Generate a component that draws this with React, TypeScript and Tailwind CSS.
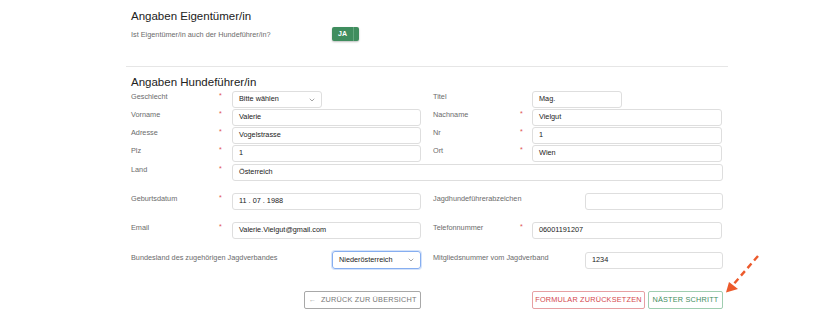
import { ChevronDown } from "lucide-react";

type FieldProps = {
  label: string;
  required?: boolean;
  value?: string;
  select?: boolean;
  right?: boolean;
  inputClass: string;
};

function Field({ label, required, value, select, right, inputClass }: FieldProps) {
  return (
    <div className="flex items-start">
      <div className={`${right ? "w-[87px]" : "w-[88px]"} pt-[1px] leading-[10px] text-[7.3px] text-[#6b6b6b]`}>
        {label}
      </div>
      <div className={`${right ? "w-[12px]" : "w-[13px]"} leading-[10px] text-[7px] text-[#e0524f]`}>
        {required ? "*" : ""}
      </div>
      <div
        className={`${inputClass} flex items-center justify-between border border-[#dedede] rounded-[3px] bg-white pl-[6px] pr-[5px] text-[7.3px] text-[#222]`}
      >
        <span>{value}</span>
        {select && <ChevronDown size={8} strokeWidth={1.6} className="text-[#555]" />}
      </div>
    </div>
  );
}

export default function App() {
  return (
    <div className="relative w-[820px] h-[322px] overflow-hidden bg-white font-['Liberation_Sans',Arial,sans-serif]">
      <div className="ml-[126px] w-[602px]">
        {/* Eigentümer */}
        <div className="h-[67px] border-b border-[#e6e6e6] pl-[5px] pt-[9px]">
          <h2 className="text-[11.5px] leading-[14px] text-[#222]">Angaben Eigentümer/in</h2>
          <div className="flex items-start mt-[4px]">
            <div className="w-[201px] pt-[3px] leading-[10px] text-[7.3px] text-[#6b6b6b]">
              Ist Eigentümer/in auch der Hundeführer/in?
            </div>
            <div className="flex h-[14px] rounded-[2px] bg-[#3f8d5e] shadow-[0_1px_2px_rgba(0,0,0,0.25)]">
              <div className="w-[21px] flex items-center justify-center text-[7px] font-bold text-white">JA</div>
              <div className="w-[6px] border-l border-[#63a77e]" />
            </div>
          </div>
        </div>

        {/* Hundeführer */}
        <div className="pl-[5px] pt-[8px]">
          <h2 className="text-[11.5px] leading-[14px] text-[#222]">Angaben Hundeführer/in</h2>

          <div className="mt-[2px] flex flex-col gap-[1px]">
            <div className="grid grid-cols-2 gap-x-[12px] w-[592px]">
              <Field label="Geschlecht" required value="Bitte wählen" select inputClass="w-[90px] h-[17px]" />
              <Field label="Titel" right value="Mag." inputClass="w-[90px] h-[17px]" />
            </div>
            <div className="grid grid-cols-2 gap-x-[12px] w-[592px]">
              <Field label="Vorname" required value="Valerie" inputClass="w-[189px] h-[17px]" />
              <Field label="Nachname" required right value="Vielgut" inputClass="w-[190px] h-[17px]" />
            </div>
            <div className="grid grid-cols-2 gap-x-[12px] w-[592px]">
              <Field label="Adresse" required value="Vogelstrasse" inputClass="w-[189px] h-[17px]" />
              <Field label="Nr" required right value="1" inputClass="w-[190px] h-[17px]" />
            </div>
            <div className="grid grid-cols-2 gap-x-[12px] w-[592px]">
              <Field label="Plz" required value="1" inputClass="w-[189px] h-[17px]" />
              <Field label="Ort" required right value="Wien" inputClass="w-[190px] h-[17px]" />
            </div>
            <div className="w-[592px] mt-[1px]">
              <Field label="Land" required value="Österreich" inputClass="w-[491px] h-[17px]" />
            </div>
          </div>

          <div className="mt-[12px] flex flex-col gap-[12px]">
            <div className="grid grid-cols-2 gap-x-[12px] w-[592px]">
              <Field label="Geburtsdatum" required value="11 . 07 . 1988" inputClass="w-[189px] h-[17px]" />
              <div className="flex items-start justify-between">
                <div className="pt-[1px] leading-[10px] text-[7.3px] text-[#6b6b6b]">Jagdhundeführerabzeichen</div>
                <div className="w-[138px] h-[17px] border border-[#dedede] rounded-[3px]" />
              </div>
            </div>
            <div className="grid grid-cols-2 gap-x-[12px] w-[592px]">
              <Field label="Email" required value="Valerie.Vielgut@gmail.com" inputClass="w-[189px] h-[17px]" />
              <Field label="Telefonnummer" required right value="06001191207" inputClass="w-[190px] h-[17px]" />
            </div>
            <div className="grid grid-cols-2 gap-x-[12px] w-[592px]">
              <div className="flex items-start justify-between">
                <div className="pt-[2px] leading-[10px] text-[7.3px] text-[#6b6b6b]">
                  Bundesland des zugehörigen Jagdverbandes
                </div>
                <div className="w-[89px] h-[18px] flex items-center justify-between border border-[#86aef0] rounded-[3px] shadow-[0_0_0_1px_rgba(134,174,240,0.35)] pl-[6px] pr-[5px] text-[7.3px] text-[#222]">
                  <span>Niederösterreich</span>
                  <ChevronDown size={8} strokeWidth={1.6} className="text-[#555]" />
                </div>
              </div>
              <div className="flex items-start justify-between">
                <div className="pt-[2px] leading-[10px] text-[7.3px] text-[#6b6b6b]">Mitgliedsnummer vom Jagdverband</div>
                <div className="w-[138px] h-[17px] mt-[1px] flex items-center border border-[#dedede] rounded-[3px] pl-[6px] text-[7.3px] text-[#222]">
                  1234
                </div>
              </div>
            </div>
          </div>

          {/* Buttons */}
          <div className="mt-[22px] grid grid-cols-2 gap-x-[12px] w-[592px]">
            <div className="flex justify-end">
              <button className="w-[117px] h-[18px] flex items-center justify-center gap-[5px] border border-[#a8a8a8] rounded-[2px] text-[7.3px] text-[#777] uppercase tracking-[0.2px]">
                <span className="text-[#999]">←</span>
                <span>Zurück zur Übersicht</span>
              </button>
            </div>
            <div className="flex justify-end gap-[3px]">
              <button className="w-[113px] h-[18px] flex items-center justify-center border border-[#e6a0a3] rounded-[2px] text-[7.3px] text-[#d4474e] uppercase tracking-[0.2px]">
                Formular zurücksetzen
              </button>
              <button className="w-[75px] h-[18px] flex items-center justify-center border border-[#9fcdb0] rounded-[2px] text-[7.3px] text-[#3f8d5e] uppercase tracking-[0.2px]">
                Näster Schritt
              </button>
            </div>
          </div>
        </div>
      </div>

      {/* annotation arrow */}
      <svg className="absolute inset-0 pointer-events-none" width="820" height="322" viewBox="0 0 820 322">
        <line x1="758" y1="256" x2="732" y2="286" stroke="#ec5a2c" strokeWidth="2.4" strokeDasharray="6 4" />
        <polygon points="726,292.5 729,282 738,289" fill="#ec5a2c" />
      </svg>
    </div>
  );
}
